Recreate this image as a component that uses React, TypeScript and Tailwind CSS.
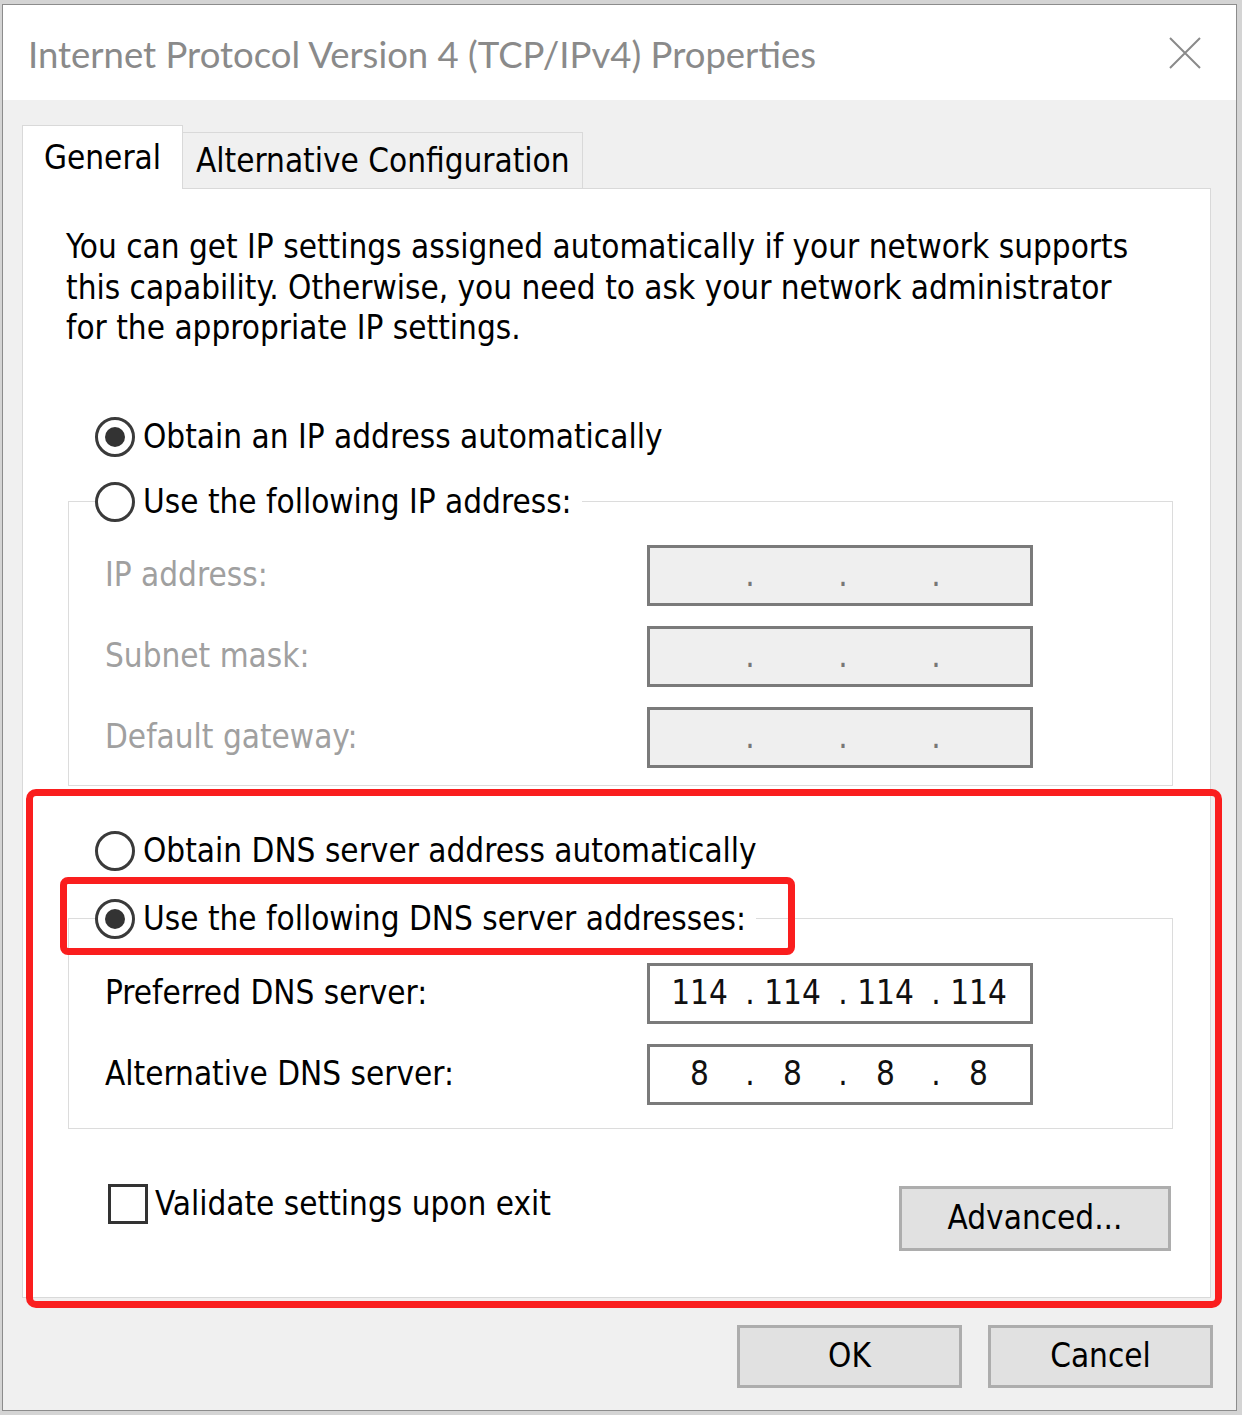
import React from "react";

const dlg = "font-['DejaVu_Sans_Condensed','DejaVu_Sans',sans-serif] text-[33px]";

function Radio({ checked }: { checked?: boolean }) {
    return (
        <span className="w-[40px] h-[40px] rounded-full border-[3px] border-[#3a3a3a] bg-white flex items-center justify-center shrink-0">
            {checked && <span className="w-[20px] h-[20px] rounded-full bg-[#333]" />}
        </span>
    );
}

function RadioRow({ label, checked }: { label: string; checked?: boolean }) {
    return (
        <div className="flex items-center gap-[8px] h-[40px] text-black leading-[40px]">
            <Radio checked={checked} />
            <span>{label}</span>
        </div>
    );
}

// champ IP façon Windows : 4 octets séparés par des points
function IpBox({ parts, disabled }: { parts: string[]; disabled?: boolean }) {
    return (
        <div
            className={
                "w-[386px] h-[61px] border-[3px] border-[#7a7a7a] flex items-center pl-[10px] text-[#111] " +
                (disabled ? "bg-[#efefef]" : "bg-white")
            }
        >
            {parts.map((p, i) => (
                <React.Fragment key={i}>
                    {i > 0 && <span className={"w-[14px] text-center translate-x-[4px] " + (disabled ? "text-[#777]" : "")}>.</span>}
                    <span className="w-[79px] text-center">{p}</span>
                </React.Fragment>
            ))}
        </div>
    );
}

function FieldRow({ label, parts, disabled }: { label: string; parts: string[]; disabled?: boolean }) {
    return (
        <div className="flex items-center">
            <span className={"w-[542px] " + (disabled ? "text-[#a0a0a0]" : "text-black")}>{label}</span>
            <IpBox parts={parts} disabled={disabled} />
        </div>
    );
}

function GroupBox({ legend, checked, children, className }: { legend: string; checked?: boolean; children: React.ReactNode; className?: string }) {
    return (
        <fieldset className={"w-[1105px] ml-[45px] border border-[#dcdcdc] " + (className ?? "")}>
            <legend className="ml-[26px] pr-[10px]">
                <RadioRow label={legend} checked={checked} />
            </legend>
            {children}
        </fieldset>
    );
}

function Button({ label, className }: { label: string; className?: string }) {
    return (
        <div className={"bg-[#e1e1e1] border-[3px] border-[#adadad] flex items-center justify-center text-black " + (className ?? "")}>
            {label}
        </div>
    );
}

export default function App() {
    const empty = ["", "", "", ""];
    return (
        <div className={"relative w-[1242px] h-[1415px] bg-[#d4d4d4] pt-[4px] pl-[2px] overflow-hidden " + dlg}>
            <div className="w-[1235px] h-[1407px] border border-[#8c8c8c] bg-[#f0f0f0] flex flex-col">
                {/* barre de titre */}
                <div className="h-[95px] bg-white flex items-center justify-between pl-[25px] pr-[35px] pt-[4px]">
                    <span className="font-['Lato',sans-serif] text-[36.5px] text-[#8a8a8a]">
                        Internet Protocol Version 4 (TCP/IPv4) Properties
                    </span>
                    <svg width="32" height="32" viewBox="0 0 32 32" className="-mt-[4px]">
                        <path d="M1 1L31 31M31 1L1 31" stroke="#8a8a8a" strokeWidth="2" />
                    </svg>
                </div>

                <div className="pt-[25px] pl-[19px]">
                    {/* onglets */}
                    <div className="flex items-end">
                        <div className="relative z-10 w-[161px] h-[64px] -mb-[1px] bg-white border border-b-0 border-[#d9d9d9] flex items-center pl-[21px] text-black">
                            General
                        </div>
                        <div className="w-[400px] h-[56px] border border-b-0 border-l-0 border-[#d9d9d9] bg-[#f0f0f0] flex items-center pl-[13px] text-black">
                            Alternative Configuration
                        </div>
                    </div>

                    {/* panneau */}
                    <div className="w-[1189px] bg-white border border-[#d9d9d9] pt-[38px] pb-[46px]">
                        <p className="ml-[43px] leading-[40.5px] text-black">
                            You can get IP settings assigned automatically if your network supports
                            <br />
                            this capability. Otherwise, you need to ask your network administrator
                            <br />
                            for the appropriate IP settings.
                        </p>

                        <div className="ml-[72px] mt-[68px]">
                            <RadioRow label="Obtain an IP address automatically" checked />
                        </div>

                        <GroupBox legend="Use the following IP address:" className="mt-[25px] pb-[17px]">
                            <div className="pl-[36px] mt-[23px] flex flex-col gap-[20px]">
                                <FieldRow label="IP address:" parts={empty} disabled />
                                <FieldRow label="Subnet mask:" parts={empty} disabled />
                                <FieldRow label="Default gateway:" parts={empty} disabled />
                            </div>
                        </GroupBox>

                        <div className="ml-[72px] mt-[45px]">
                            <RadioRow label="Obtain DNS server address automatically" />
                        </div>

                        <GroupBox legend="Use the following DNS server addresses:" checked className="mt-[28px] pb-[23px]">
                            <div className="pl-[36px] mt-[24px] flex flex-col gap-[20px]">
                                <FieldRow label="Preferred DNS server:" parts={["114", "114", "114", "114"]} />
                                <FieldRow label="Alternative DNS server:" parts={["8", "8", "8", "8"]} />
                            </div>
                        </GroupBox>

                        <div className="mt-[55px] ml-[85px] mr-[39px] flex items-start justify-between">
                            <div className="flex items-center gap-[7px] h-[40px] text-black">
                                <span className="w-[40px] h-[40px] border-[3px] border-[#333] bg-white" />
                                <span>Validate settings upon exit</span>
                            </div>
                            <Button label="Advanced..." className="mt-[2px] w-[272px] h-[65px]" />
                        </div>
                    </div>
                </div>

                <div className="mt-[27px] flex justify-end gap-[26px] pr-[23px]">
                    <Button label="OK" className="w-[225px] h-[63px]" />
                    <Button label="Cancel" className="w-[225px] h-[63px]" />
                </div>
            </div>

            {/* annotations rouges */}
            <div className="absolute left-[26px] top-[789px] w-[1196px] h-[519px] border-[7px] border-[#fa1e1e] rounded-[10px]" />
            <div className="absolute left-[60px] top-[877px] w-[735px] h-[78px] border-[7px] border-[#fa1e1e] rounded-[8px]" />
        </div>
    );
}
